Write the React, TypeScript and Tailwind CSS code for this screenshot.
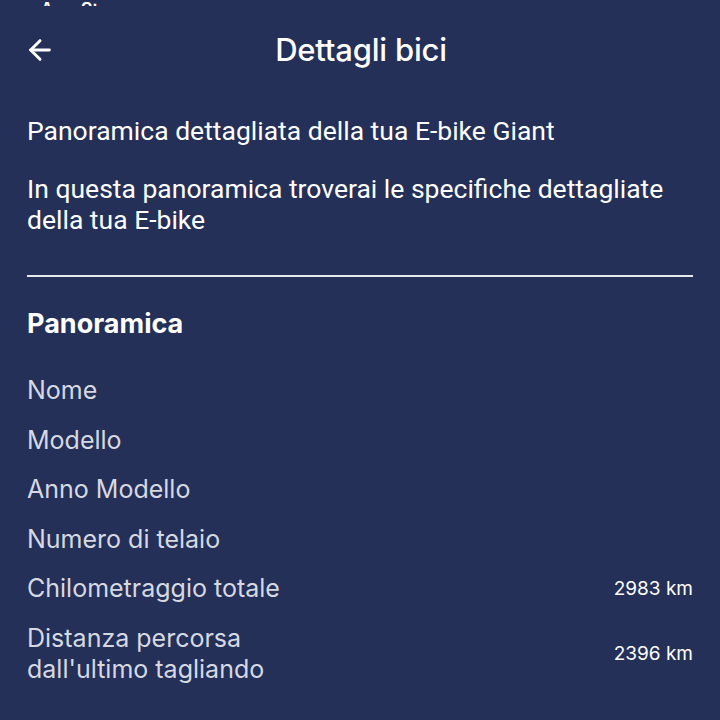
import { ArrowLeft } from 'lucide-react'

const rows: { label: string, value?: string }[] = [
  { label: 'Nome' },
  { label: 'Modello' },
  { label: 'Anno Modello' },
  { label: 'Numero di telaio' },
  { label: 'Chilometraggio totale', value: '2983 km' },
]

export default function App() {
  return (
    <div className="w-[720px] h-[720px] overflow-hidden bg-[#243058] text-white font-['Inter',sans-serif]">
      <div className="h-[6px] overflow-hidden relative">
        <div className="absolute left-[27px] bottom-0 text-[18px] leading-[18px] font-semibold translate-y-[13px]">◂ App Store</div>
      </div>

      <div className="relative flex items-center justify-center h-[88px]">
        <ArrowLeft className="absolute left-[24px] w-[32px] h-[32px]" strokeWidth={2.2} />
        <h1 className="text-[31px] font-medium tracking-[-0.2px] ml-[2px]">Dettagli bici</h1>
      </div>

      <div className="px-[27px] font-['Roboto',sans-serif] text-[26.5px] leading-[31px]">
        <p className="mt-[21px]">Panoramica dettagliata della tua E-bike Giant</p>
        <p className="mt-[27px]">In questa panoramica troverai le specifiche dettagliate della tua E-bike</p>
      </div>

      <div className="mx-[27px] mt-[40px] h-[2px] bg-[#e6e8ee]" />

      <div className="px-[27px]">
        <h2 className="mt-[31px] text-[27px] font-bold leading-[32px]">Panoramica</h2>
        <div className="mt-[35px] flex flex-col gap-[18.6px] text-[#d6d9e1] text-[25px] leading-[31px]">
          {rows.map(r => (
            <div key={r.label} className="flex items-center justify-between">
              <span>{r.label}</span>
              {r.value && <span className="text-white text-[19px]">{r.value}</span>}
            </div>
          ))}
          <div className="flex items-center justify-between">
            <span className="leading-[31px]">Distanza percorsa<br />dall'ultimo tagliando</span>
            <span className="text-white text-[19px]">2396 km</span>
          </div>
        </div>
      </div>
    </div>
  )
}
